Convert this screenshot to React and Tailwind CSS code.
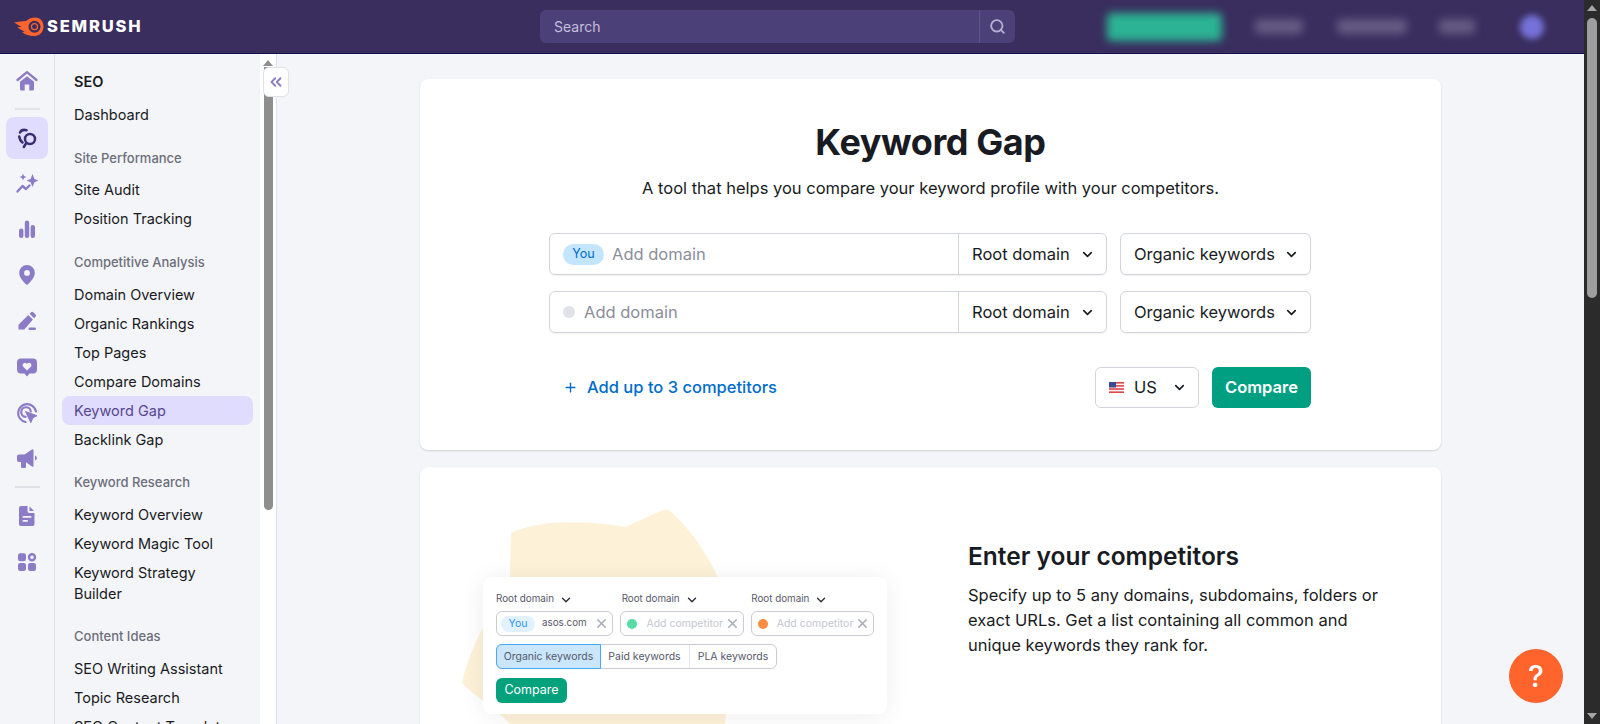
import React from 'react';
import { ChevronDown, ChevronsLeft, Plus, Search, X } from 'lucide-react';

const navGroups = [
  { label: 'Site Performance', gap: 'mt-[18.5px]', items: ['Site Audit', 'Position Tracking'] },
  {
    label: 'Competitive Analysis',
    gap: 'mt-[19px]',
    items: ['Domain Overview', 'Organic Rankings', 'Top Pages', 'Compare Domains', 'Keyword Gap', 'Backlink Gap'],
  },
  { label: 'Keyword Research', gap: 'mt-[18.5px]', items: ['Keyword Overview', 'Keyword Magic Tool', 'Keyword Strategy Builder'] },
  { label: 'Content Ideas', gap: 'mt-[18.5px]', items: ['SEO Writing Assistant', 'Topic Research', 'SEO Content Template'] },
];

const Logo = () => (
  <svg width="30" height="22" viewBox="0 0 30 22" fill="none">
    <path
      d="M0 6.5 C5 5.5 8 5.5 12 5 C15 2.5 18 1.5 21 1.5 C26.5 1.5 29.5 5.5 29.5 10.5 C29.5 16 25.5 20 20.5 20 C15 20 11 18.5 8 16 L11 15.5 C7.5 14.5 5 12.5 3.5 11 L7.5 11 C5 9.5 2.5 8 0 6.5Z"
      fill="#ff642d"
    />
    <circle cx="20.5" cy="10.7" r="6" fill="#392e5e" />
    <circle cx="20.5" cy="10.7" r="3.6" fill="#ff642d" />
    <circle cx="20.5" cy="10.7" r="2.4" fill="#392e5e" />
  </svg>
);

const RailIcon = ({ children, color = '#8c7bc7' }) => (
  <svg width="24" height="24" viewBox="0 0 24 24" fill={color} stroke="none">
    {children}
  </svg>
);

const railIcons = {
  home: (
    <>
      <path d="M2.5 11 12 3.2 21.5 11" fill="none" stroke="#8c7bc7" strokeWidth="2.3" strokeLinecap="round" strokeLinejoin="round" />
      <path d="M5 12.8 12 7.2l7 5.6V20a1.5 1.5 0 0 1-1.5 1.5h-3.2v-6H9.7v6H6.5A1.5 1.5 0 0 1 5 20Z" />
    </>
  ),
  sparkle: (
    <>
      <path d="M17.5 3 19.4 8l4 1.5-4 1.7-1.9 4.8-1.9-4.8-4-1.7 4-1.5Z" />
      <path d="M8 2.5 9 5l2.5 1L9 7 8 9.5 7 7 4.5 6 7 5Z" />
      <path d="M2.5 20.5 7.5 15l3.5 3 3.5-3.5" fill="none" stroke="#8c7bc7" strokeWidth="2.4" strokeLinecap="round" strokeLinejoin="round" />
    </>
  ),
  bars: (
    <>
      <rect x="4" y="11.5" width="4.4" height="9.5" rx="2.2" />
      <rect x="9.8" y="3.5" width="4.4" height="17.5" rx="2.2" />
      <rect x="15.6" y="8" width="4.4" height="13" rx="2.2" />
    </>
  ),
  pin: (
    <path
      fillRule="evenodd"
      d="M12 2a7.8 7.8 0 0 1 7.8 7.8c0 5-4.6 9.6-7.8 12.2-3.2-2.6-7.8-7.2-7.8-12.2A7.8 7.8 0 0 1 12 2Zm0 5a2.9 2.9 0 1 0 0 5.8A2.9 2.9 0 0 0 12 7Z"
    />
  ),
  pen: (
    <>
      <path d="M3.5 20.5v-4.8L13.3 6l4.6 4.6-8.6 9.9Z" />
      <path d="m14.6 4.7 1.5-1.4a1.6 1.6 0 0 1 2.2 0l2.2 2.2a1.6 1.6 0 0 1 0 2.2l-1.4 1.5Z" />
      <rect x="13.5" y="18.5" width="7.5" height="2.6" rx="1.3" />
    </>
  ),
  heart: (
    <>
      <path d="M6 3.5h12a4 4 0 0 1 4 4v7a4 4 0 0 1-4 4h-3.5L12 21.5 9.5 18.5H6a4 4 0 0 1-4-4v-7a4 4 0 0 1 4-4Z" />
      <path d="M12 15.5 8 11.6a2.4 2.4 0 0 1 3.4-3.3l.6.6.6-.6a2.4 2.4 0 0 1 3.4 3.3Z" fill="#f4f5f9" />
    </>
  ),
  target: (
    <>
      <path d="M10.5 21A9 9 0 1 1 21 10.5" fill="none" stroke="#8c7bc7" strokeWidth="2.2" strokeLinecap="round" />
      <path d="M10.5 15.8A4.8 4.8 0 1 1 15.8 10.5" fill="none" stroke="#8c7bc7" strokeWidth="2.2" strokeLinecap="round" />
      <path d="m10.5 10.5 11.5 4.2-4 2-2.2 5Z" stroke="#8c7bc7" strokeLinejoin="round" />
    </>
  ),
  megaphone: (
    <>
      <path d="M4 8.5h5.5L17 3.5a1 1 0 0 1 1.5.8v15.4a1 1 0 0 1-1.5.8l-6-4.3V21a1 1 0 0 1-1 1H7a1 1 0 0 1-1-1v-5H4a2 2 0 0 1-2-2v-3.5a2 2 0 0 1 2-2Z" />
      <path d="M20 9.5a2.6 2.6 0 0 1 0 5Z" />
    </>
  ),
  doc: (
    <>
      <path d="M6 2h6.5v5a2 2 0 0 0 2 2h5v11a2 2 0 0 1-2 2H6a2 2 0 0 1-2-2V4a2 2 0 0 1 2-2Z" />
      <path d="M14.5 2.5 19 7h-4.5Z" />
      <rect x="7.5" y="12" width="9" height="1.8" rx=".9" fill="#f4f5f9" />
      <rect x="7.5" y="16" width="5.5" height="1.8" rx=".9" fill="#f4f5f9" />
    </>
  ),
  grid: (
    <>
      <rect x="3" y="3.2" width="8" height="8" rx="2.2" />
      <circle cx="17" cy="7.2" r="3" fill="none" stroke="#8c7bc7" strokeWidth="2.4" />
      <rect x="3" y="13" width="8" height="8" rx="2.2" />
      <rect x="13" y="13" width="8" height="8" rx="2.2" />
    </>
  ),
};

const railRows = [
  { name: 'sparkle', height: 'h-[46px]' },
  { name: 'bars', height: 'h-[46px]' },
  { name: 'pin', height: 'h-[46px]' },
  { name: 'pen', height: 'h-[46px]' },
  { name: 'heart', height: 'h-[46px]' },
  { name: 'target', height: 'h-[45px]' },
  { name: 'megaphone', height: 'h-[45px]' },
];

const SeoIcon = () => (
  <svg width="24" height="24" viewBox="0 0 24 24" fill="none" stroke="#3b2d72" strokeWidth="2.5" strokeLinecap="round" strokeLinejoin="round">
    <circle cx="15" cy="13" r="5" />
    <path d="M11 17.5 8.8 21" />
    <path d="M11.5 4.2C8.5 3.4 6 4.4 5 6.5" />
    <path d="M4.2 10.5c.3 2.5 1.5 4.5 3.3 6" />
  </svg>
);

const Rail = () => (
  <div className="flex w-[55px] shrink-0 flex-col items-center border-r border-[#dfe1e9] pt-[4px]">
    <div className="flex h-[46px] items-center justify-center">
      <RailIcon>{railIcons.home}</RailIcon>
    </div>
    <div className="mt-[4px] h-[2px] w-[25px] bg-[#e0e1e9]" />
    <div className="mt-[7px] flex h-[42px] w-[42px] items-center justify-center rounded-lg bg-[#e0dcfd]">
      <SeoIcon />
    </div>
    <div className="mt-[1px] flex flex-col items-center">
      {railRows.map((row) => (
        <div key={row.name} className={`flex items-center justify-center ${row.height}`}>
          <RailIcon>{railIcons[row.name]}</RailIcon>
        </div>
      ))}
    </div>
    <div className="mt-[6px] h-[2px] w-[25px] bg-[#e0e1e9]" />
    <div className="mt-[5px] flex h-[46px] items-center justify-center">
      <RailIcon>{railIcons.doc}</RailIcon>
    </div>
    <div className="flex h-[46px] items-center justify-center">
      <RailIcon>{railIcons.grid}</RailIcon>
    </div>
  </div>
);

const NavItem = ({ name }) => (
  <div
    className={`rounded-lg px-3 py-1 text-[14.5px] leading-[21px] ${
      name === 'Keyword Gap' ? 'bg-[#e0dcfd] text-[#56478f]' : 'text-[#191b23]'
    }`}
  >
    {name}
  </div>
);

const SubNav = () => (
  <div className="relative flex w-[222px] shrink-0 border-r border-[#dfe1e9]">
    <div className="flex-1 overflow-hidden pl-[7px] pr-[7px] pt-[13px]">
      <div className="px-3 py-1 text-[14.5px] font-semibold leading-[21px] text-[#191b23]">SEO</div>
      <div className="mt-[4px]">
        <NavItem name="Dashboard" />
      </div>
      {navGroups.map((group) => (
        <div key={group.label} className={group.gap}>
          <div className="mb-[7.5px] px-3 text-[13px] font-medium leading-5 text-[#6c6e79]">{group.label}</div>
          {group.items.map((name) => (
            <NavItem key={name} name={name} />
          ))}
        </div>
      ))}
    </div>
    {/* sidebar scrollbar */}
    <div className="flex w-4 shrink-0 flex-col items-center bg-white pt-[6px]">
      <div className="h-0 w-0 border-x-[5px] border-b-[6px] border-x-transparent border-b-[#8e8e8e]" />
      <div className="mt-[1px] h-[443px] w-[9px] rounded-b-[5px] bg-[#8e8e8e]" />
    </div>
    <button className="absolute left-[208px] top-[13px] flex h-[30px] w-[26px] items-center justify-center rounded-md border border-[#e0e1e9] bg-white">
      <ChevronsLeft size={18} strokeWidth={2.4} color="#8c7bc7" />
    </button>
  </div>
);

const Header = () => (
  <div className="flex h-[54px] shrink-0 items-center border-b border-[#14104a] bg-[#392e5e]">
    <div className="ml-[14px] flex w-[526px] items-center gap-[3px]">
      <Logo />
      <span className="text-[16.5px] font-extrabold tracking-[1.8px] text-white">SEMRUSH</span>
    </div>
    <div className="flex h-[33px] w-[475px] items-center rounded-md bg-[#4c4079]">
      <span className="flex-1 pl-[14px] text-sm text-[#c5bfdc]">Search</span>
      <div className="flex h-full w-9 items-center justify-center border-l border-[#5f5490]">
        <Search size={17} strokeWidth={2.6} color="#b7afd3" />
      </div>
    </div>
    <div className="ml-[92px] h-[28px] w-[115px] rounded bg-[#2cb394] blur-[4px]" />
    <div className="ml-[33px] h-[15px] w-[48px] rounded bg-[#655a83] blur-[4px]" />
    <div className="ml-[34px] h-[15px] w-[70px] rounded bg-[#655a83] blur-[4px]" />
    <div className="ml-[32px] h-[15px] w-[36px] rounded bg-[#655a83] blur-[4px]" />
    <div className="ml-[45px] h-[24px] w-[24px] rounded-full bg-[#7571d8] blur-[3px]" />
  </div>
);

const DomainRow = ({ you }) => (
  <div className="flex gap-[13px]">
    <div className="flex h-[42px] w-[558px] items-center rounded-md border border-[#d1d4db] shadow-[0_1px_1px_rgba(0,0,0,0.05)]">
      <div className="flex flex-1 items-center pl-[13px]">
        {you ? (
          <span className="mr-[8px] flex h-[21px] w-[41px] items-center justify-center rounded-full bg-[#c4e5fe] text-[12.5px] text-[#006dca]">
            You
          </span>
        ) : (
          <span className="mr-[9px] h-3 w-3 rounded-full bg-[#e0e1e9]" />
        )}
        <span className="text-[16.5px] text-[#8a8e9b]">Add domain</span>
      </div>
      <div className="flex h-full w-[148px] items-center justify-between border-l border-[#d1d4db] pl-[13px] pr-[11px] text-[16.5px] text-[#191b23]">
        Root domain
        <ChevronDown size={15} strokeWidth={2.6} />
      </div>
    </div>
    <div className="flex h-[42px] w-[191px] items-center justify-between rounded-md border border-[#d1d4db] pl-[13px] pr-[11px] text-[16.5px] text-[#191b23] shadow-[0_1px_1px_rgba(0,0,0,0.05)]">
      Organic keywords
      <ChevronDown size={15} strokeWidth={2.6} />
    </div>
  </div>
);

const Flag = () => (
  <svg width="15" height="11" viewBox="0 0 15 11">
    <rect width="15" height="11" fill="#f4f5f9" />
    <rect y="0" width="15" height="1.6" fill="#e0474c" />
    <rect y="3.1" width="15" height="1.6" fill="#e0474c" />
    <rect y="6.2" width="15" height="1.6" fill="#e0474c" />
    <rect y="9.4" width="15" height="1.6" fill="#e0474c" />
    <rect width="7" height="5.5" fill="#3d4a8f" />
  </svg>
);

const MiniField = ({ width, dot, you }) => (
  <div
    className="flex h-[25px] items-center rounded-md border border-[#c9ccd6] pl-1 pr-[3px] text-[10.5px]"
    style={{ width }}
  >
    {you ? (
      <>
        <span className="mr-[7px] flex h-4 w-[34px] items-center justify-center rounded-full bg-[#e1f1ff] text-[#2b94ff]">You</span>
        <span className="flex-1 text-[9.8px] text-[#55586a]">asos.com</span>
      </>
    ) : (
      <>
        <span className="ml-[2px] mr-[9px] h-[10px] w-[10px] rounded-full" style={{ background: dot }} />
        <span className="flex-1 whitespace-nowrap text-[10.5px] text-[#c4c7cf]">Add competitor</span>
      </>
    )}
    <X size={15} strokeWidth={2.4} color="#a9acb8" />
  </div>
);

const MiniLabel = ({ width }) => (
  <div className="flex items-center gap-[5px] text-[9.8px] text-[#55586a]" style={{ width }}>
    Root domain
    <ChevronDown size={14} strokeWidth={2.4} color="#2b2e3d" />
  </div>
);

const Illustration = () => (
  <div className="relative w-[548px] shrink-0 pl-[63px] pt-[110px]">
    <svg className="absolute left-[30px] top-[30px]" width="280" height="227" viewBox="0 0 280 227">
      <path
        d="M61 36 Q61 36 65 34 C90 25 125 22 175 30 L213 13 Q217 11 220 14 C250 40 275 85 285 130 L275 227 L60 227 C45 210 25 200 12 186 C25 130 55 100 60 80 Z"
        fill="#fdf1d7"
      />
    </svg>
    <div className="relative h-[137px] w-[404px] rounded-lg bg-white px-[13px] pt-[14px] shadow-[0_2px_24px_rgba(30,30,60,0.07)]">
      <div className="flex h-[17px]">
        <MiniLabel width={126} />
        <MiniLabel width={130} />
        <MiniLabel width={123} />
      </div>
      <div className="mt-[3px] flex gap-[7px]">
        <MiniField width={119} you />
        <MiniField width={125} dot="#59dba6" />
        <MiniField width={125} dot="#ff8c43" />
      </div>
      <div className="mt-2 flex h-[25px] w-[281px] rounded-md border border-[#c9ccd6] text-[10.5px] text-[#55586a]">
        <div className="-m-px flex w-[105px] items-center justify-center rounded-l-md border border-[#4aa8f7] bg-[#c9e6fd]">
          Organic keywords
        </div>
        <div className="flex w-[90px] items-center justify-center border-r border-[#e6e7ed]">Paid keywords</div>
        <div className="flex flex-1 items-center justify-center">PLA keywords</div>
      </div>
      <div className="mt-[9px] flex h-[25px] w-[71px] items-center justify-center rounded-md bg-[#04a17d] text-[12.5px] text-white">
        Compare
      </div>
    </div>
  </div>
);

export default function App() {
  return (
    <div className="flex h-screen w-full overflow-hidden bg-[#f4f5f9] font-['Inter',sans-serif]">
      <div className="flex min-w-0 flex-1 flex-col">
        <Header />
        <div className="flex min-h-0 flex-1">
          <Rail />
          <SubNav />
          {/* main content */}
          <div className="relative min-w-0 flex-1 overflow-hidden pt-[25px]">
            <div className="mx-auto w-[1021px]">
              <div className="h-[371px] rounded-lg bg-white pt-[41px] shadow-[0_1px_2px_rgba(0,0,0,0.15)]">
                <h1 className="text-center text-[36px] font-bold leading-[44px] tracking-[-0.4px] text-[#191b23]">Keyword Gap</h1>
                <p className="mt-[12px] text-center text-[16.5px] leading-6 text-[#191b23]">
                  A tool that helps you compare your keyword profile with your competitors.
                </p>
                <div className="ml-[129px] mt-[33px] flex w-[762px] flex-col gap-4">
                  <DomainRow you />
                  <DomainRow />
                  <div className="mt-[18px] flex h-[41px] items-center">
                    <Plus size={15} strokeWidth={2.2} color="#006dca" className="ml-[14px]" />
                    <span className="ml-[9px] flex-1 text-[16.5px] font-medium text-[#006dca]">Add up to 3 competitors</span>
                    <div className="flex h-[41px] w-[104px] items-center rounded-md border border-[#d1d4db] pl-[13px] pr-[11px] text-[16.5px] text-[#191b23]">
                      <Flag />
                      <span className="ml-[10px] flex-1">US</span>
                      <ChevronDown size={15} strokeWidth={2.6} />
                    </div>
                    <button className="ml-[13px] h-[41px] w-[99px] rounded-md bg-[#009f81] text-[16.5px] font-semibold text-white">
                      Compare
                    </button>
                  </div>
                </div>
              </div>
              <div className="mt-[17px] flex h-[400px] rounded-lg bg-white shadow-[0_1px_2px_rgba(0,0,0,0.15)]">
                <Illustration />
                <div className="pt-[72px]">
                  <h2 className="text-[24.5px] font-semibold leading-[34px] text-[#191b23]">Enter your competitors</h2>
                  <p className="mt-[10px] w-[425px] text-[16.5px] leading-[25px] text-[#191b23]">
                    Specify up to 5 any domains, subdomains, folders or exact URLs. Get a list containing all common and
                    unique keywords they rank for.
                  </p>
                </div>
              </div>
            </div>
            <button className="absolute bottom-[21px] right-[21px] flex h-[54px] w-[54px] items-center justify-center rounded-full bg-[#ff642d] text-[30px] font-medium text-white">
              ?
            </button>
          </div>
        </div>
      </div>
      {/* browser scrollbar */}
      <div className="flex w-4 shrink-0 flex-col items-center bg-[#2b2b2b] pt-[5px]">
        <div className="h-0 w-0 border-x-[5px] border-b-[6px] border-x-transparent border-b-[#a3a3a3]" />
        <div className="mt-[7px] h-[280px] w-[10px] rounded-[5px] bg-[#9e9e9e]" />
        <div className="mt-auto mb-[5px] h-0 w-0 border-x-[5px] border-t-[6px] border-x-transparent border-t-[#a3a3a3]" />
      </div>
    </div>
  );
}
